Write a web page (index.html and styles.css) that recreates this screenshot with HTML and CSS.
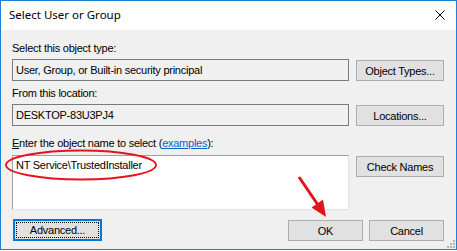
FILE: index.html
```html
<html>
    <head>
        <title>Select User or Group</title>
        <link rel="stylesheet" href="styles.css">
    </head>
    <body>
        <div class="dialog">
            <div class="titlebar">
                <span class="title">Select User or Group</span>
                <svg class="close" width="10" height="10" viewBox="0 0 10 10">
                    <path d="M0.5 0.5 L9.5 9.5 M9.5 0.5 L0.5 9.5" stroke="#000" stroke-width="1" fill="none"/>
                </svg>
            </div>
            <div class="content">
                <div class="label first">Select this object type:</div>
                <div class="row">
                    <div class="field">User, Group, or Built-in security principal</div>
                    <div class="btn">Object Types...</div>
                </div>
                <div class="label">From this location:</div>
                <div class="row">
                    <div class="field">DESKTOP-83U3PJ4</div>
                    <div class="btn">Locations...</div>
                </div>
                <div class="label third"><u>E</u>nter the object name to select (<a class="link">examples</a>):</div>
                <div class="row top">
                    <div class="field names">NT Service\TrustedInstaller</div>
                    <div class="btn">Check Names</div>
                </div>
                <div class="footer">
                    <div class="btn wide focused"><span class="focus-rect">Advanced...</span></div>
                    <div class="spacer"></div>
                    <div class="btn small">OK</div>
                    <div class="btn small">Cancel</div>
                </div>
            </div>
            <!-- annotations drawn over the dialog -->
            <svg class="marks" width="457" height="251" viewBox="0 0 457 251">
                <ellipse cx="81" cy="165" rx="75" ry="14.5" fill="none" stroke="#e3141c" stroke-width="1.8"/>
                <line x1="299" y1="177" x2="318" y2="205" stroke="#e3141c" stroke-width="3"/>
                <polygon points="326,217 323,199.5 311.5,207.5" fill="#e3141c"/>
            </svg>
            <svg class="grip" width="10" height="10" viewBox="0 0 10 10">
                <rect x="7" y="1" width="2" height="2" fill="#b4b4b4"/>
                <rect x="4" y="4" width="2" height="2" fill="#b4b4b4"/>
                <rect x="7" y="4" width="2" height="2" fill="#b4b4b4"/>
                <rect x="1" y="7" width="2" height="2" fill="#b4b4b4"/>
                <rect x="4" y="7" width="2" height="2" fill="#b4b4b4"/>
                <rect x="7" y="7" width="2" height="2" fill="#b4b4b4"/>
            </svg>
        </div>
    </body>
</html>
```

FILE: styles.css
```css
body {
    margin: 0;
    background: #ffffff;
    font-family: "Liberation Sans", Arial, sans-serif;
    font-size: 11px;
    letter-spacing: -0.25px;
    color: #000000;
}
.dialog {
    position: relative;
    width: 457px;
    height: 250px;
    box-sizing: border-box;
    border: 1px solid #1c80d6;
    background: #f0f0f0;
    display: flex;
    flex-direction: column;
}
.titlebar {
    height: 29px;
    background: #ffffff;
    display: flex;
    align-items: center;
    justify-content: space-between;
    padding: 0 11px 0 8px;
}
.title {
    font-family: "Noto Sans", sans-serif;
    font-size: 11.5px;
    letter-spacing: 0;
    margin-top: -2px;
}
.close {
    margin-top: -2px;
}
.content {
    padding: 0 12px 0 11px;
    display: flex;
    flex-direction: column;
}
.label {
    line-height: 15px;
    margin-top: 5px;
    margin-bottom: 3px;
}
.label.first {
    margin-top: 11px;
    margin-bottom: 3px;
}
.label.third {
    margin-top: 10px;
    margin-bottom: 4px;
}
.link {
    color: #0066cc;
    text-decoration: underline;
}
.row {
    display: flex;
    gap: 7px;
    align-items: flex-end;
}
.row.top {
    align-items: flex-start;
}
.field {
    width: 337px;
    height: 22px;
    box-sizing: border-box;
    border: 1px solid #7a7a7a;
    padding: 0 3px;
    line-height: 20px;
}
.field.names {
    height: 55px;
    background: #ffffff;
    border-color: #a0a0a0 #e3e3e3 #e3e3e3 #a0a0a0;
    line-height: 13px;
    padding-top: 3px;
}
.btn {
    width: 88px;
    height: 21px;
    box-sizing: border-box;
    border: 1px solid #adadad;
    background: #e1e1e1;
    display: flex;
    align-items: center;
    justify-content: center;
}
.row.top .btn {
    margin-top: 1px;
}
.footer {
    display: flex;
    align-items: flex-end;
    gap: 6px;
    margin-top: 9px;
}
.spacer {
    flex: 1;
}
.btn.small {
    width: 75px;
}
.btn.wide {
    width: 89px;
    height: 22px;
    margin-left: 1px;
    border: 2px solid #0078d7;
    padding: 1px;
}
.focus-rect {
    flex: 1;
    align-self: stretch;
    border: 1px dotted #000000;
    display: flex;
    align-items: center;
    justify-content: center;
}
.marks {
    position: absolute;
    left: -1px;
    top: -1px;
}
.grip {
    position: absolute;
    right: 0;
    bottom: 0;
}
```
